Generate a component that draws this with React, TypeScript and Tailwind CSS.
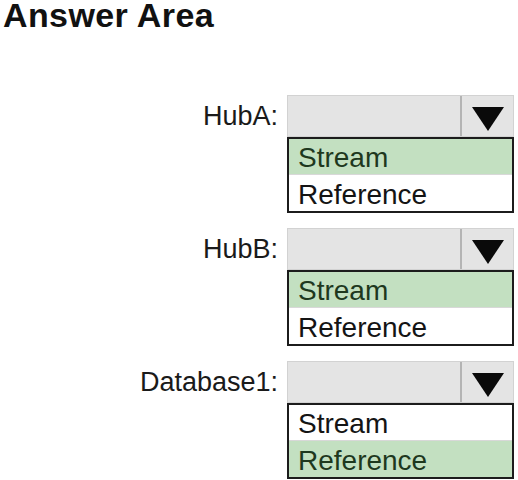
import React, { FC } from 'react'

type Row = {
  label: string
  selected: 'Stream' | 'Reference'
}

const rows: Row[] = [
  { label: 'HubA:', selected: 'Stream' },
  { label: 'HubB:', selected: 'Stream' },
  { label: 'Database1:', selected: 'Reference' },
]

const options = ['Stream', 'Reference'] as const

const DropRow: FC<Row> = ({ label, selected }) => {
  return (
    <div className="flex">
      <div className="w-[287px] h-[42px] flex items-center justify-end pr-[9px] text-[27px] text-[#1a1a1a] leading-none">
        {label}
      </div>
      <div className="w-[227px] flex flex-col">
        <div className="h-[42px] flex border border-[#d2d2d2] bg-[#e4e4e4]">
          <div className="flex-1" />
          <div className="w-[53px] border-l-2 border-[#b4b4b4] flex items-center justify-center pt-[6px]">
            <svg width="32" height="24" viewBox="0 0 32 24">
              <path d="M0 0 H32 L16 24 Z" fill="#0a0a0a" />
            </svg>
          </div>
        </div>
        <div className="border-2 border-[#1c1c1c] flex flex-col">
          {options.map((opt, i) => (
            <div
              key={opt}
              className={`h-[36px] flex items-center pl-[9px] pt-[3px] text-[28px] leading-none ${
                opt === selected ? 'bg-[#c3e0c1] text-[#1e381e]' : 'bg-white text-[#141414]'
              } ${i === 0 ? 'border-b border-[#d8d8d8]' : ''}`}>
              {opt}
            </div>
          ))}
        </div>
      </div>
    </div>
  )
}

const App: FC = () => {
  return (
    <div className="w-[518px] h-[480px] bg-white overflow-hidden font-['Liberation_Sans',Arial,sans-serif]">
      <h1 className="text-[34px] font-bold leading-[30px] tracking-[0.4px] pl-[3px] text-[#111]">Answer Area</h1>
      <div className="mt-[65px] flex flex-col gap-[15px]">
        {rows.map((r) => (
          <DropRow key={r.label} label={r.label} selected={r.selected} />
        ))}
      </div>
    </div>
  )
}

export default App
